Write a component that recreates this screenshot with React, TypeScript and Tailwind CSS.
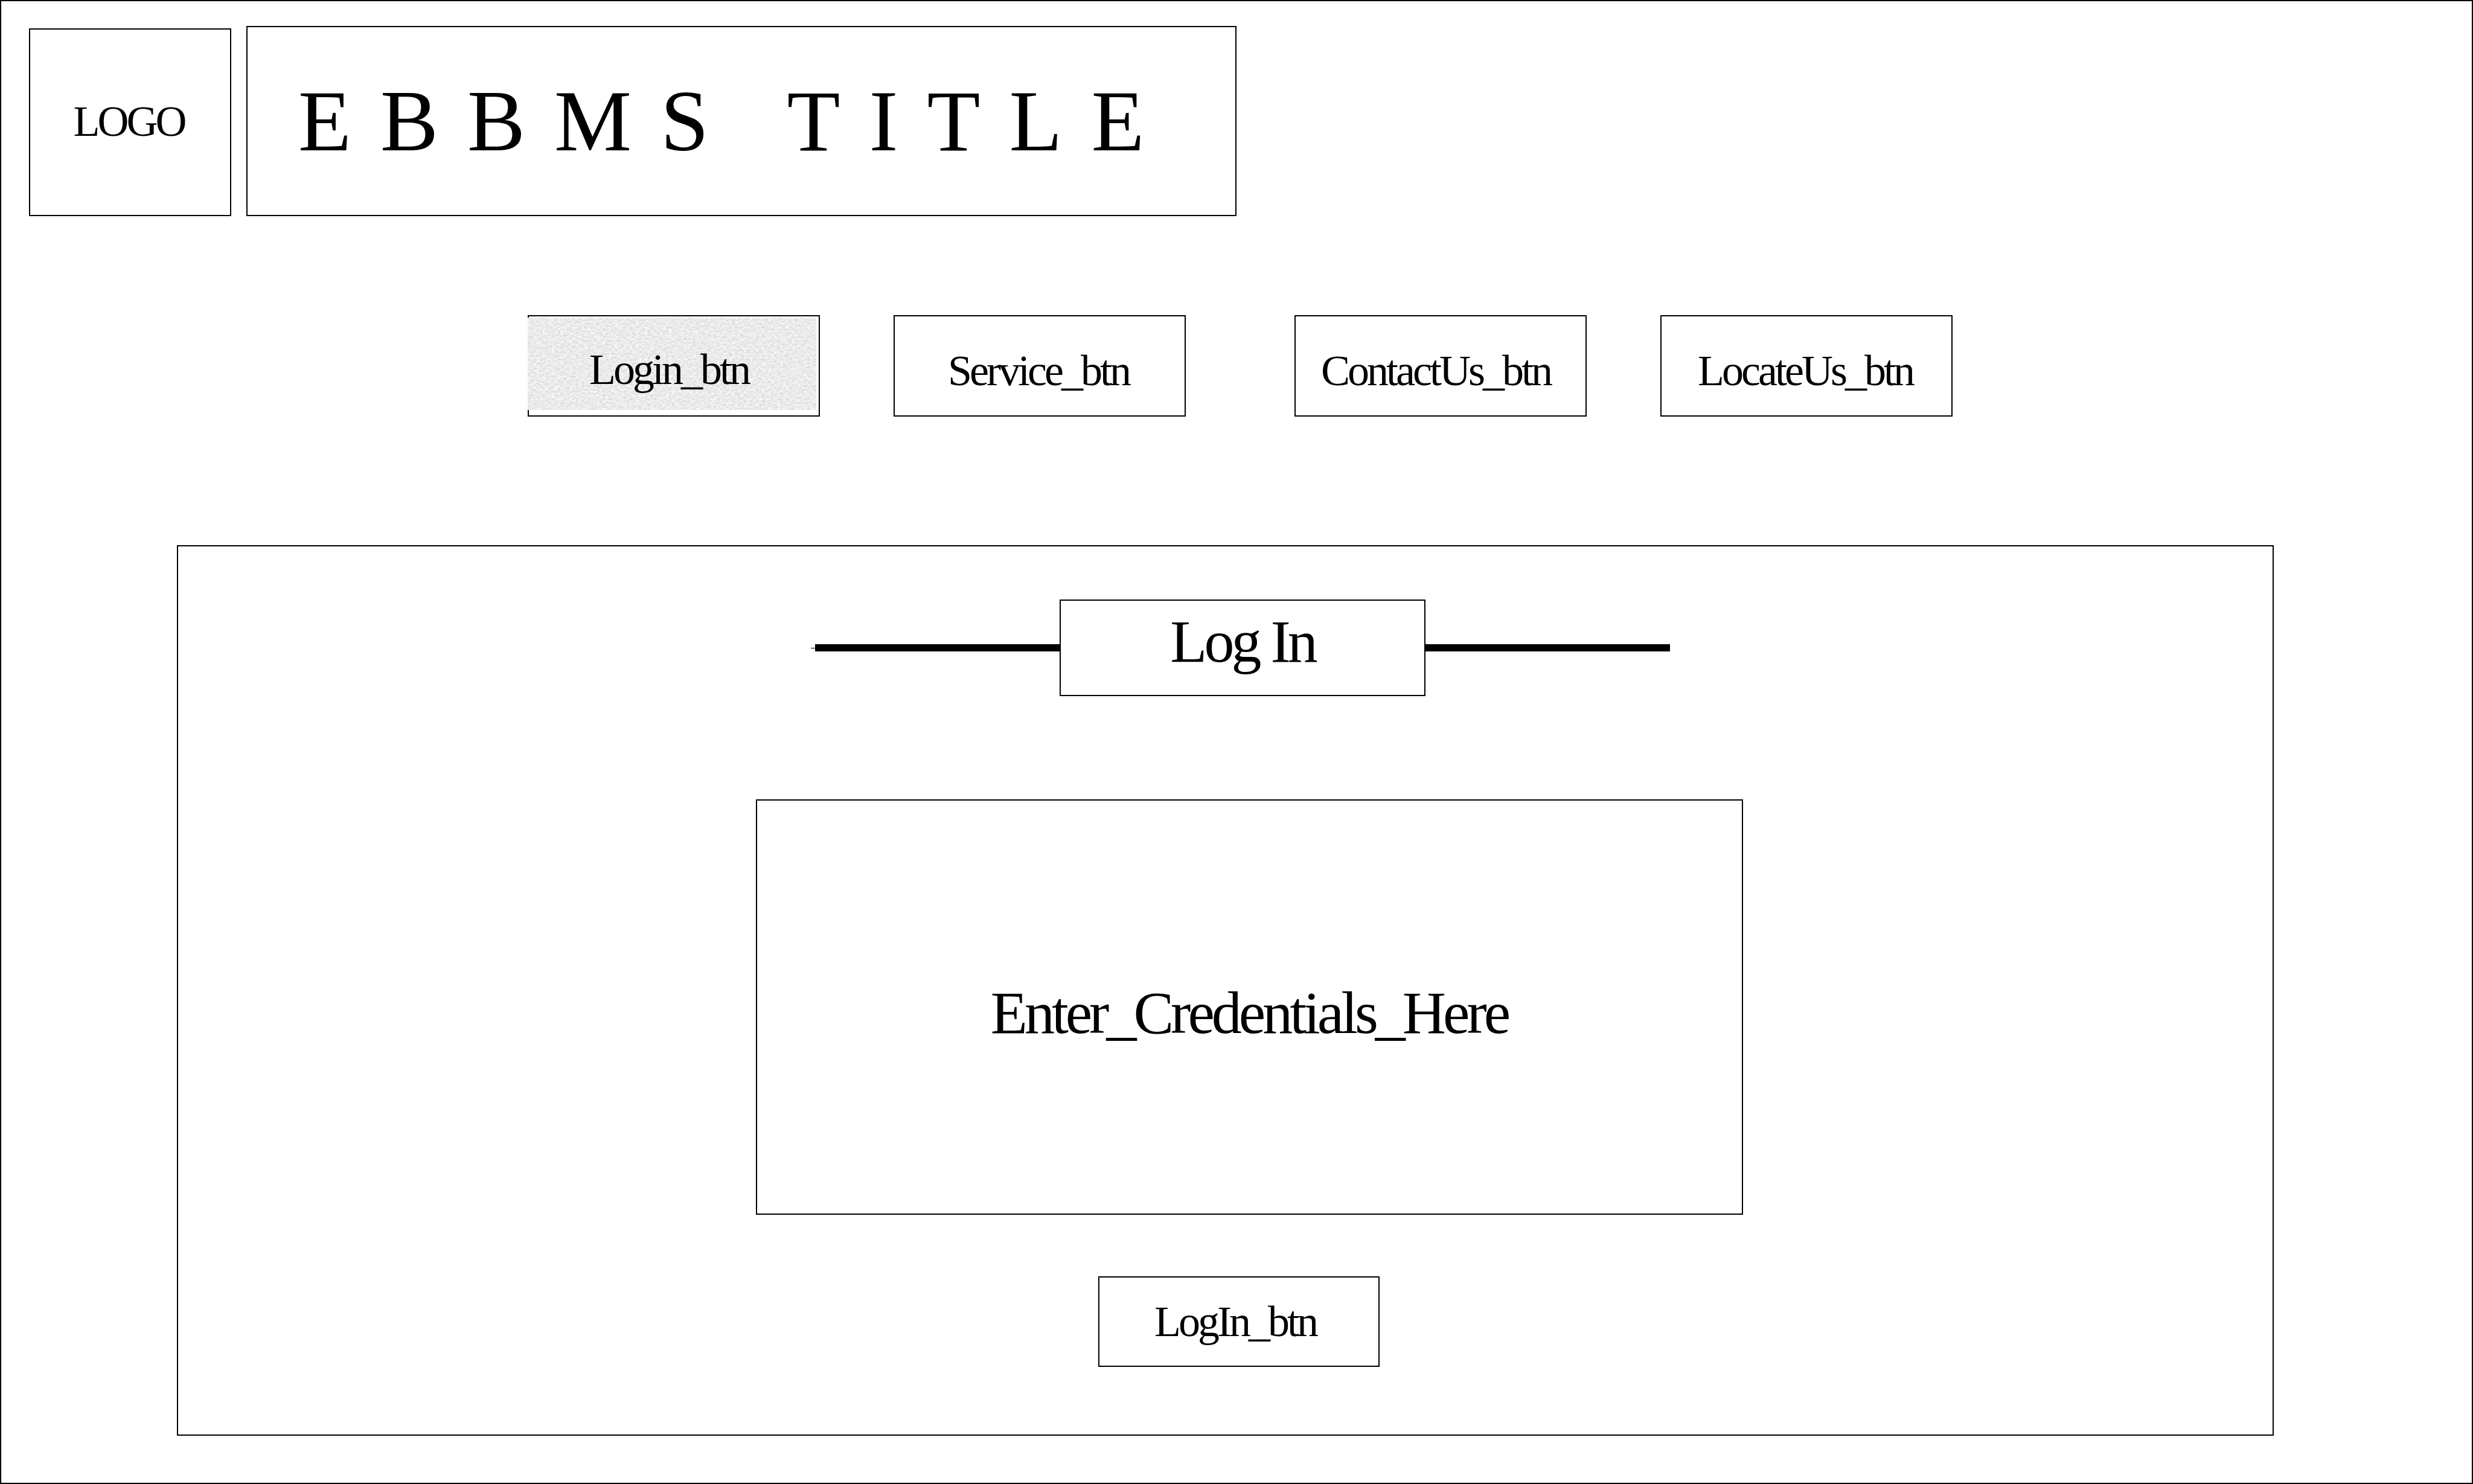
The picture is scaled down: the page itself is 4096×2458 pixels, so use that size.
import type { ReactNode } from "react";

const frame = "border-2 border-black bg-white";
const label = "text-[72px] leading-[84px] tracking-[-4px]";
const display = "text-[100px] leading-[116px] tracking-[-5px]";

/** Speckled paper fill that marks the active navigation button. */
function PaperTexture() {
  return (
    <span className="absolute top-0.5 right-1 bottom-[9px] -left-0.5 bg-[#ebebeb]">
      <svg className="block size-full" aria-hidden="true">
        <filter id="paper" x="0" y="0" width="100%" height="100%" colorInterpolationFilters="sRGB">
          <feTurbulence type="fractalNoise" baseFrequency="0.2 0.32" numOctaves={2} seed={7} stitchTiles="stitch" />
          <feColorMatrix values="0.22 0 0 0 0.81  0.22 0 0 0 0.81  0.22 0 0 0 0.81  0 0 0 0 1" />
        </filter>
        <rect width="100%" height="100%" filter="url(#paper)" />
      </svg>
    </span>
  );
}

function NavButton({ children, active = false, shift = false }: { children: ReactNode; active?: boolean; shift?: boolean }) {
  return (
    <button
      type="button"
      aria-current={active ? "page" : undefined}
      className={`relative flex h-[168px] w-[484px] items-center justify-center ${label} ${frame} ${active ? "pt-3" : "pt-4"} ${shift ? "pr-4" : "pr-1"}`}
    >
      {active && <PaperTexture />}
      <span className="relative">{children}</span>
    </button>
  );
}

export default function App() {
  return (
    <div className="flex min-h-screen flex-col border-2 border-black bg-white font-['Liberation_Serif',serif] text-black">
      <header className="flex w-1/2 items-end gap-[25px] pt-[41px] pl-[46px]">
        <div className={`flex h-[311px] w-[335px] shrink-0 items-center justify-center pr-1 pb-1 ${label} ${frame}`}>
          LOGO
        </div>
        <h1 className={`flex h-[315px] flex-1 items-center pl-[84px] text-[144px] leading-[166px] tracking-[48px] whitespace-nowrap ${frame}`}>
          EBBMS TITLE
        </h1>
      </header>

      <nav className="mt-[164px] flex justify-center gap-[180px] pl-3">
        <div className="flex gap-[122px]">
          <NavButton active shift>Login_btn</NavButton>
          <NavButton>Service_btn</NavButton>
        </div>
        <div className="flex gap-[122px]">
          <NavButton shift>ContactUs_btn</NavButton>
          <NavButton>LocateUs_btn</NavButton>
        </div>
      </nav>

      <main className={`mt-[213px] mr-[328px] mb-[78px] ml-[291px] flex flex-1 flex-col ${frame}`}>
        <form className="flex flex-1 flex-col items-center pt-[88px] pb-[112px] pl-[57px]" onSubmit={(e) => e.preventDefault()}>
          <div className="relative flex w-[1416px] items-center">
            <span className="absolute -left-[7px] h-px w-[7px] bg-black" />
            <span className="h-3 flex-1 bg-black" />
            <h2 className={`flex h-40 w-[606px] items-center justify-center pb-5 ${display} ${frame}`}>
              Log In
            </h2>
            <span className="h-3 flex-1 bg-black" />
          </div>

          <div className="mt-[171px] flex flex-1 pl-[22px]">
            <input
              type="text"
              aria-label="Credentials"
              placeholder="Enter_Credentials_Here"
              className={`w-[1635px] pt-5 text-center outline-none placeholder:text-black placeholder:opacity-100 ${display} ${frame}`}
            />
          </div>

          <div className="mt-[102px] pr-3">
            <button type="submit" className={`flex h-[150px] w-[466px] items-center justify-center pr-3 ${label} ${frame}`}>
              LogIn_btn
            </button>
          </div>
        </form>
      </main>
    </div>
  );
}
